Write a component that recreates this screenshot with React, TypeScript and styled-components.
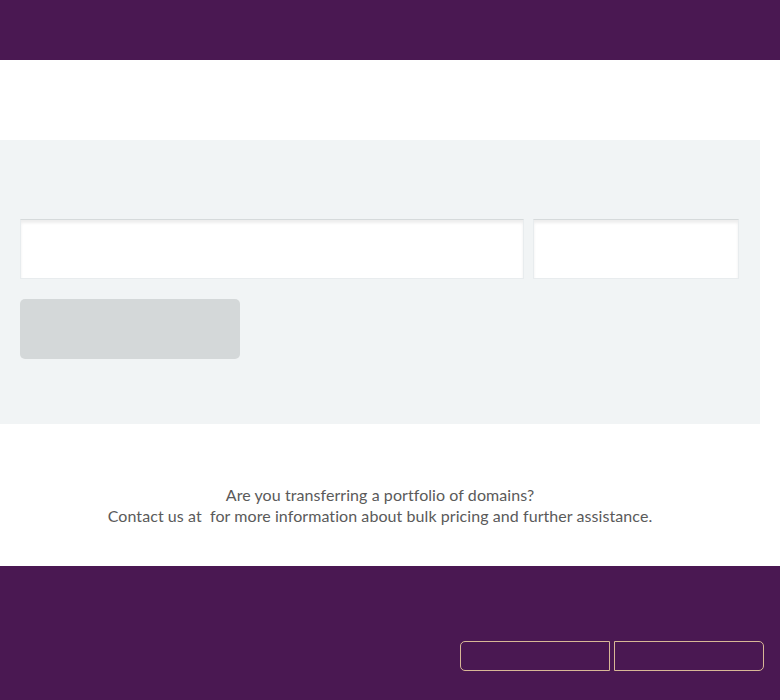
import React from 'react';
import styled, { createGlobalStyle } from 'styled-components';

const GlobalStyle = createGlobalStyle`
	body {
		margin: 0;
		background: #ffffff;
		font-family: 'Lato', 'Open Sans', sans-serif;
	}
`;

const Header = styled.header`
	height: 60px;
	background-color: #4a1852;
`;

const TitleArea = styled.div`
	height: 80px;
`;

const Content = styled.main`
	width: 760px;
`;

const SearchPanel = styled.section`
	box-sizing: border-box;
	background-color: #f1f4f5;
	padding: 79px 21px 65px 20px;
	display: flex;
	flex-direction: column;
	gap: 20px;
`;

const InputRow = styled.div`
	display: grid;
	grid-template-columns: 504px 206px;
	gap: 9px;
`;

const Field = styled.input`
	height: 60px;
	box-sizing: border-box;
	border: 1px solid #e8ecee;
	border-top-color: #d6dadb;
	background: #ffffff;
	box-shadow: inset 0 3px 3px rgba(0, 0, 0, 0.07);
	outline: none;
	padding: 0 14px;
	font-family: inherit;
`;

const SubmitButton = styled.button`
	width: 220px;
	height: 60px;
	border: none;
	border-radius: 5px;
	background-color: #d4d8d9;
	cursor: pointer;
`;

const InfoSection = styled.section`
	height: 142px;
	box-sizing: border-box;
	padding-top: 60px;
	text-align: center;
	color: #5a5a5a;
	font-size: 16px;
	letter-spacing: 0.07px;
	line-height: 21px;
`;

const InfoLine = styled.p`
	margin: 0;
`;

const Footer = styled.footer`
	height: 134px;
	box-sizing: border-box;
	background-color: #4a1852;
	padding: 75px 16px 0 0;
	display: flex;
	justify-content: flex-end;
	align-items: flex-start;
	gap: 4px;
`;

const FooterButton = styled.button<{ $side: 'left' | 'right' }>`
	width: 150px;
	height: 30px;
	background: transparent;
	border: 1px solid #d8b896;
	border-radius: ${(p) => (p.$side === 'left' ? '5px 0 0 5px' : '0 5px 5px 0')};
	cursor: pointer;
`;

export default function App() {
	return (
		<>
			<GlobalStyle />
			<Header />
			<TitleArea />
			<Content>
				<SearchPanel>
					<InputRow>
						<Field type="text" />
						<Field type="text" />
					</InputRow>
					<SubmitButton />
				</SearchPanel>
				<InfoSection>
					<InfoLine>Are you transferring a portfolio of domains?</InfoLine>
					<InfoLine>Contact us at &nbsp;for more information about bulk pricing and further assistance.</InfoLine>
				</InfoSection>
			</Content>
			<Footer>
				<FooterButton $side="left" />
				<FooterButton $side="right" />
			</Footer>
		</>
	);
}
